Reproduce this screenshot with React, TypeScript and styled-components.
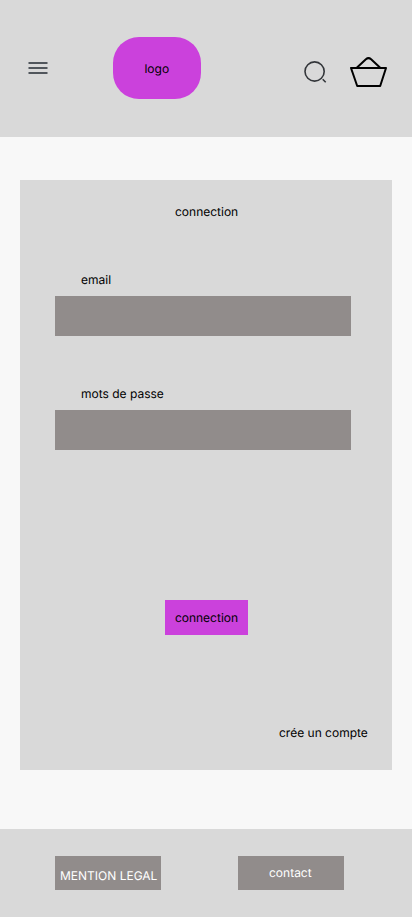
import React from "react";
import styled, { createGlobalStyle } from "styled-components";

const GlobalStyle = createGlobalStyle`
  *, *::before, *::after { box-sizing: border-box; }
  body {
    margin: 0;
    background: #f8f8f8;
    color: #000;
    font: 400 12px/15px Inter, "Liberation Sans", sans-serif;
    text-rendering: geometricPrecision;
  }
`;

const Page = styled.div`
  display: flex;
  flex-direction: column;
  width: 412px;
  height: 917px;
`;

const Header = styled.header`
  display: flex;
  align-items: flex-start;
  height: 137px;
  padding: 37px 25px 0 28px;
  background: #d9d9d9;
`;

const IconButton = styled.button<{ $width: number; $height: number; $top: number }>`
  display: block;
  width: ${(p) => p.$width}px;
  height: ${(p) => p.$height}px;
  margin: ${(p) => p.$top}px 0 0;
  padding: 0;
  border: 0;
  background: none;

  svg {
    display: block;
  }
`;

const Logo = styled.div`
  display: flex;
  align-items: center;
  justify-content: center;
  width: 88px;
  height: 62px;
  margin-left: 65px;
  padding-right: 0.5px;
  border-radius: 26px;
  background: #cb41dc;
`;

const Actions = styled.div`
  display: flex;
  gap: 23px;
  margin-left: auto;
`;

const Card = styled.form`
  display: flex;
  flex-direction: column;
  height: 590px;
  margin: 43px 20px 0;
  padding: 24px 24px 0 35px;
  background: #d9d9d9;
`;

const Title = styled.h1`
  margin: 0 0 53px 120px;
  font: inherit;
`;

const Field = styled.label`
  display: flex;
  flex-direction: column;
  gap: 9px;
  width: 296px;
  margin-bottom: 50px;
`;

const Label = styled.span`
  padding-left: 26px;
`;

const Input = styled.input`
  width: 100%;
  height: 40px;
  padding: 0 10px;
  border: 0;
  border-radius: 0;
  background: #918c8b;
  font: inherit;
`;

const Submit = styled.button`
  width: 83px;
  height: 35px;
  margin: 100px 0 0 110px;
  padding: 0;
  border: 0;
  background: #cb41dc;
  color: #000;
  font: inherit;
  text-rendering: inherit;
`;

const AccountLink = styled.a`
  width: 89px;
  margin: 90px 0 0 224px;
  color: inherit;
  text-decoration: none;
  white-space: nowrap;
`;

const Footer = styled.footer`
  display: flex;
  gap: 77px;
  height: 88px;
  margin-top: auto;
  padding: 27px 0 0 55px;
  background: #d9d9d9;
`;

const FooterLink = styled.a<{ $top: number; $left: number }>`
  width: 106px;
  height: 34px;
  padding: ${(p) => p.$top}px 0 0 ${(p) => p.$left}px;
  background: #918c8b;
  color: #fff;
  text-decoration: none;
  white-space: nowrap;
`;

export default function App() {
  return (
    <Page>
      <GlobalStyle />
      <Header>
        <IconButton $width={20} $height={12} $top={25} aria-label="Menu">
          <svg width="20" height="12" fill="#51565c">
            <path d="M.5 0h19v2H.5zM.5 5h19v2H.5zM.5 10h19v2H.5z" />
          </svg>
        </IconButton>
        <Logo>logo</Logo>
        <Actions>
          <IconButton $width={23} $height={23} $top={24} aria-label="Rechercher">
            <svg width="23" height="23" fill="none" stroke="#33363a" strokeWidth="1.6">
              <circle cx="10.6" cy="10.5" r="9.6" />
              <path d="M18.7 18.2l3 3" />
            </svg>
          </IconButton>
          <IconButton $width={37} $height={30} $top={20} aria-label="Panier">
            <svg
              width="37"
              height="30"
              fill="none"
              stroke="#000"
              strokeWidth="2"
              strokeLinejoin="round"
            >
              <path d="M1 11h35l-5.8 18H7.2z" />
              <path d="M6.5 11l9.4-8.8q2.6-2.2 5.2 0L30.5 11" />
            </svg>
          </IconButton>
        </Actions>
      </Header>
      <Card>
        <Title>connection</Title>
        <Field>
          <Label>email</Label>
          <Input type="email" />
        </Field>
        <Field>
          <Label>mots de passe</Label>
          <Input type="password" />
        </Field>
        <Submit type="button">connection</Submit>
        <AccountLink>crée un compte</AccountLink>
      </Card>
      <Footer>
        <FooterLink $top={12} $left={5}>MENTION LEGAL</FooterLink>
        <FooterLink $top={9} $left={31}>contact</FooterLink>
      </Footer>
    </Page>
  );
}
